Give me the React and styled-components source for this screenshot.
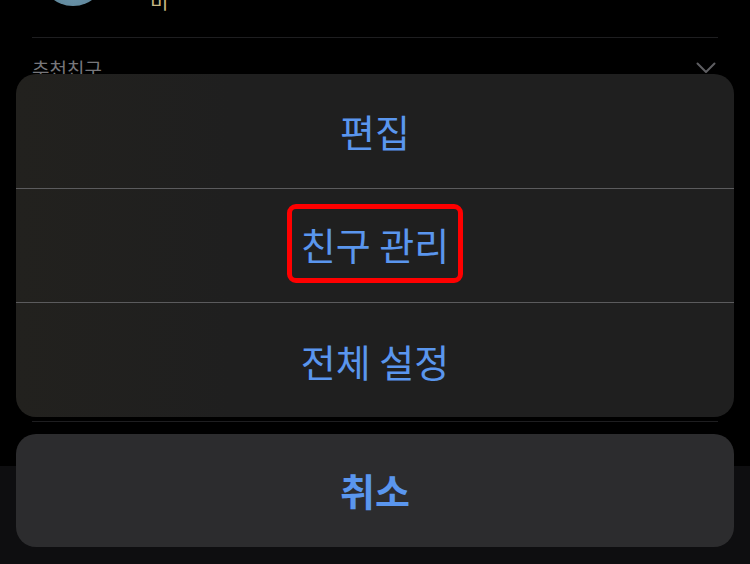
import styled, { createGlobalStyle } from 'styled-components'

const GlobalStyle = createGlobalStyle`
	* {
		box-sizing: border-box;
	}
	body {
		margin: 0;
		background: #000;
		font-family: "Noto Sans CJK KR", "Noto Sans", sans-serif;
	}
`

const actions = [
	{ label: '편집' },
	{ label: '친구 관리', marked: true },
	{ label: '전체 설정' },
]

const App = () => {
	return (
		<Screen>
			<GlobalStyle />
			<Backdrop>
				<ProfileRow>
					<Avatar />
					<Name>비</Name>
				</ProfileRow>
				<Divider />
				<SectionHeader>
					<SectionTitle>추천친구</SectionTitle>
					<svg width="20" height="12" viewBox="0 0 20 12" fill="none">
						<path d="M1.5 1.5 L10 10 L18.5 1.5" stroke="#5e5e62" strokeWidth="2" strokeLinecap="round" strokeLinejoin="round" />
					</svg>
				</SectionHeader>
				<Spacer />
				<Divider />
				<TabBar />
			</Backdrop>
			<Sheet>
				<ActionGroup>
					{actions.map((action, index) => (
						<ActionRow key={index} $first={index === 0}>
							{action.marked ? <Marked>{action.label}</Marked> : action.label}
						</ActionRow>
					))}
				</ActionGroup>
				<CancelButton>취소</CancelButton>
			</Sheet>
		</Screen>
	)
}

export default App

const Screen = styled.div`
	position: relative;
	width: 750px;
	height: 564px;
	overflow: hidden;
	background: #000;
`

const Backdrop = styled.div`
	display: flex;
	flex-direction: column;
	height: 100%;
`

const ProfileRow = styled.div`
	display: flex;
	align-items: flex-end;
	gap: 44px;
	height: 37px;
	padding: 0 40px;
	overflow: hidden;
`

const Avatar = styled.div`
	flex-shrink: 0;
	width: 66px;
	height: 66px;
	margin-bottom: 31px;
	border-radius: 50%;
	background: radial-gradient(circle at 50% 80%, #6a93a8, #4d7185);
`

const Name = styled.div`
	margin-bottom: 26px;
	font-size: 20px;
	line-height: 20px;
	color: #c8b784;
`

const Divider = styled.div`
	height: 1px;
	margin: 0 32px;
	background: #1e1e20;
	flex-shrink: 0;
`

const SectionHeader = styled.div`
	display: flex;
	align-items: center;
	justify-content: space-between;
	padding: 4px 34px 0 32px;
	height: 56px;
`

const SectionTitle = styled.div`
	font-size: 19px;
	color: #77777b;
`

const Spacer = styled.div`
	height: 327px;
`

const TabBar = styled.div`
	margin-top: 44px;
	flex: 1;
	background: #0e0e10;
`

const Sheet = styled.div`
	position: absolute;
	inset: 0;
	display: flex;
	flex-direction: column;
	gap: 17px;
	padding: 74px 16px 17px;
`

const ActionGroup = styled.div`
	display: flex;
	flex-direction: column;
	height: 343px;
	border-radius: 20px;
	overflow: hidden;
	background: linear-gradient(90deg, #22211e 0%, #1f1f1f 30%, #1f1f1f 100%);
`

const ActionRow = styled.div`
	flex: 1;
	display: flex;
	align-items: center;
	justify-content: center;
	border-top: ${(p) => (p.$first ? 'none' : '1px solid #5b5b5d')};
	font-size: 38px;
	color: #5a96ee;
`

const Marked = styled.span`
	display: inline-flex;
	align-items: center;
	height: 79px;
	margin-bottom: 4px;
	padding: 0 9px;
	border: 5px solid #ff0000;
	border-radius: 9px;
`

const CancelButton = styled.div`
	display: flex;
	align-items: center;
	justify-content: center;
	height: 113px;
	padding-bottom: 3px;
	border-radius: 20px;
	background: #2c2c2e;
	font-size: 38px;
	font-weight: 700;
	color: #5a96ee;
`
